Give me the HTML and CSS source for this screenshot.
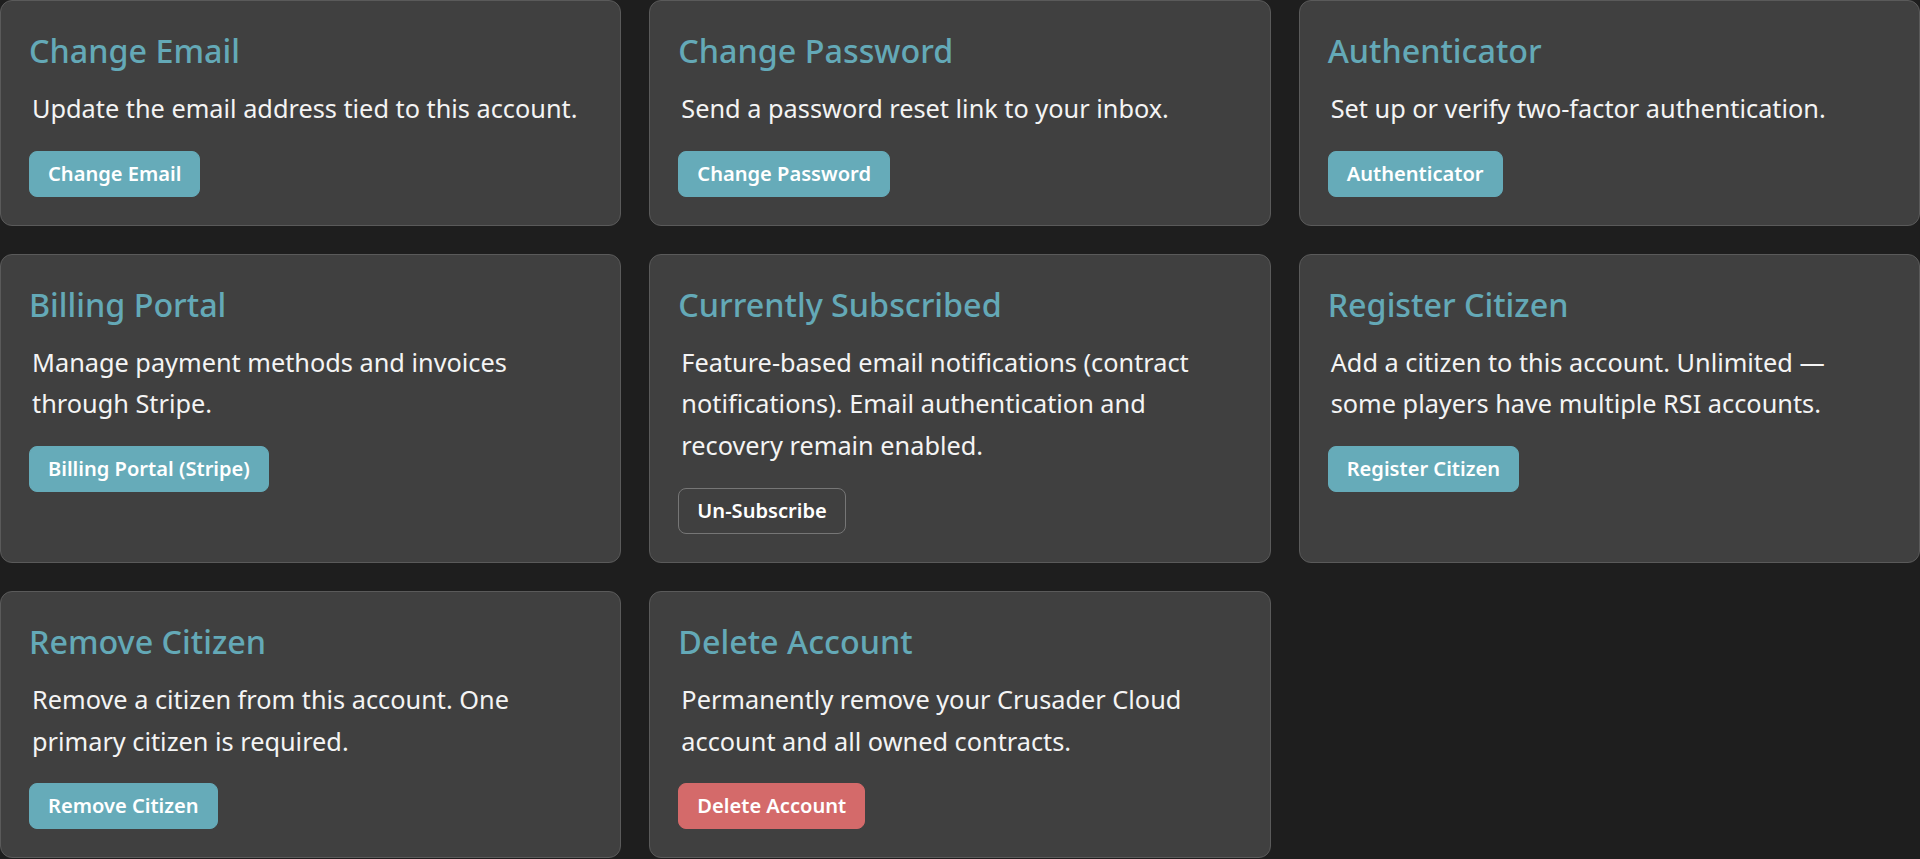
FILE: index.html
```html
<!DOCTYPE html>
<html lang="en">
<head>
<meta charset="utf-8">
<title>Account Settings</title>
<link rel="stylesheet" href="styles.css">
</head>
<body>
<main class="grid">
  <section class="card">
    <h3 class="card-title">Change Email</h3>
    <p class="card-text">Update the email address tied to this account.</p>
    <div class="actions"><button class="btn btn-primary">Change Email</button></div>
  </section>
  <section class="card">
    <h3 class="card-title">Change Password</h3>
    <p class="card-text">Send a password reset link to your inbox.</p>
    <div class="actions"><button class="btn btn-primary">Change Password</button></div>
  </section>
  <section class="card">
    <h3 class="card-title">Authenticator</h3>
    <p class="card-text">Set up or verify two-factor authentication.</p>
    <div class="actions"><button class="btn btn-primary">Authenticator</button></div>
  </section>
  <section class="card">
    <h3 class="card-title">Billing Portal</h3>
    <p class="card-text">Manage payment methods and invoices through Stripe.</p>
    <div class="actions"><button class="btn btn-primary">Billing Portal (Stripe)</button></div>
  </section>
  <section class="card">
    <h3 class="card-title">Currently Subscribed</h3>
    <p class="card-text">Feature-based email notifications (contract notifications). Email authentication and recovery remain enabled.</p>
    <div class="actions"><button class="btn btn-outline">Un-Subscribe</button></div>
  </section>
  <section class="card">
    <h3 class="card-title">Register Citizen</h3>
    <p class="card-text">Add a citizen to this account. Unlimited — some players have multiple RSI accounts.</p>
    <div class="actions"><button class="btn btn-primary">Register Citizen</button></div>
  </section>
  <section class="card">
    <h3 class="card-title">Remove Citizen</h3>
    <p class="card-text">Remove a citizen from this account. One primary citizen is required.</p>
    <div class="actions"><button class="btn btn-primary">Remove Citizen</button></div>
  </section>
  <section class="card">
    <h3 class="card-title">Delete Account</h3>
    <p class="card-text">Permanently remove your Crusader Cloud account and all owned contracts.</p>
    <div class="actions"><button class="btn btn-danger">Delete Account</button></div>
  </section>
</main>
</body>
</html>
```
FILE: styles.css
```css
* { box-sizing: border-box; }

html, body {
  margin: 0;
  padding: 0;
  background: #1e1e1e;
  color: #f2f2f2;
  font-family: "Noto Sans", "Open Sans", sans-serif;
}

.grid {
  display: grid;
  grid-template-columns: repeat(3, 1fr);
  column-gap: 28px;
  row-gap: 28px;
  align-items: stretch;
}

.card {
  background: #404040;
  border: 1px solid #5a5a5a;
  border-radius: 12px;
  padding: 28px;
  display: flex;
  flex-direction: column;
}

.card-title {
  margin: 0;
  font-size: 32.3px;
  font-weight: 500;
  line-height: 42px;
  color: #64a9b7;
}

.card-text {
  margin: 17px 0 0 0;
  padding-left: 3px;
  font-size: 25.3px;
  line-height: 41.7px;
  color: #f4f4f4;
}

.actions {
  margin-top: 21px;
  display: flex;
}

.btn {
  font-family: "Noto Sans", "Open Sans", sans-serif;
  font-size: 20.1px;
  font-weight: 600;
  line-height: 26px;
  height: 46px;
  padding: 9px 18px 11px;
  border-radius: 8px;
  border: 1px solid transparent;
  color: #ffffff;
  cursor: pointer;
}

.btn-primary {
  background: #66abb9;
  border-color: #66abb9;
}

.btn-danger {
  background: #d46a6a;
  border-color: #d46a6a;
}

.btn-outline {
  background: transparent;
  border-color: #767676;
}
```
